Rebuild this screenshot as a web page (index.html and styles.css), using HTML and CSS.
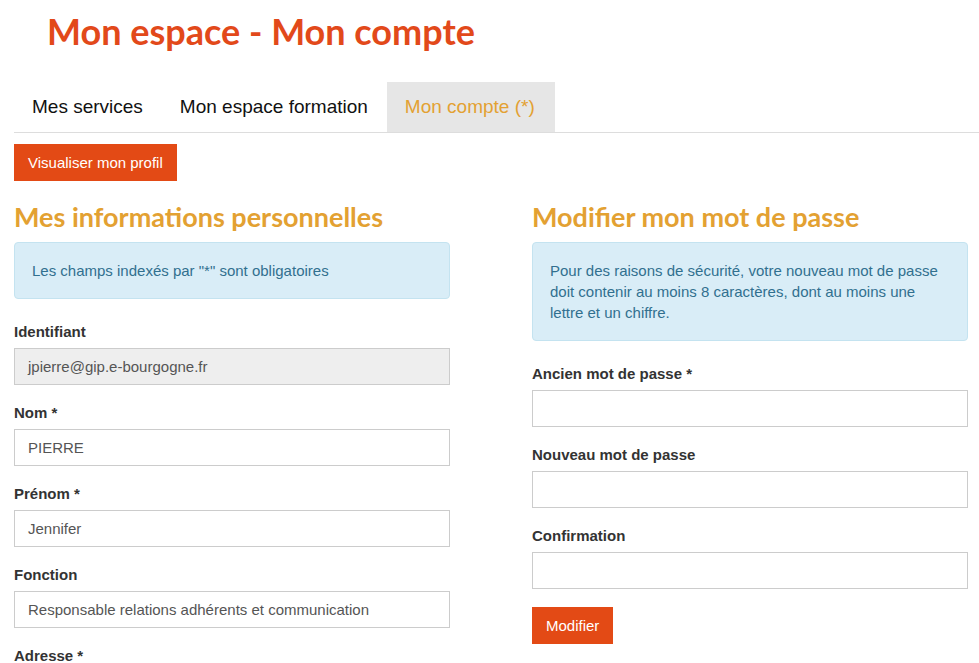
FILE: index.html
```html
<!DOCTYPE html>
<html lang="fr">
<head>
<meta charset="utf-8">
<title>Mon espace - Mon compte</title>
<link rel="stylesheet" href="styles.css">
</head>
<body>
<div class="page">
  <h1 class="title">Mon espace - Mon compte</h1>
  <ul class="tabs">
    <li class="tab">Mes services</li>
    <li class="tab">Mon espace formation</li>
    <li class="tab active">Mon compte (*)</li>
  </ul>
  <button class="btn">Visualiser mon profil</button>
  <div class="cols">
    <section class="col">
      <h2 class="heading">Mes informations personnelles</h2>
      <div class="alert">Les champs indexés par "*" sont obligatoires</div>
      <div class="group">
        <label class="label">Identifiant</label>
        <div class="input disabled">jpierre@gip.e-bourgogne.fr</div>
      </div>
      <div class="group">
        <label class="label">Nom *</label>
        <div class="input">PIERRE</div>
      </div>
      <div class="group">
        <label class="label">Prénom *</label>
        <div class="input">Jennifer</div>
      </div>
      <div class="group">
        <label class="label">Fonction</label>
        <div class="input">Responsable relations adhérents et communication</div>
      </div>
      <div class="group">
        <label class="label">Adresse *</label>
        <div class="input"></div>
      </div>
    </section>
    <section class="col">
      <h2 class="heading">Modifier mon mot de passe</h2>
      <div class="alert">Pour des raisons de sécurité, votre nouveau mot de passe doit contenir au moins 8 caractères, dont au moins une lettre et un chiffre.</div>
      <div class="group">
        <label class="label">Ancien mot de passe *</label>
        <div class="input"></div>
      </div>
      <div class="group">
        <label class="label">Nouveau mot de passe</label>
        <div class="input"></div>
      </div>
      <div class="group">
        <label class="label">Confirmation</label>
        <div class="input"></div>
      </div>
      <button class="btn">Modifier</button>
    </section>
  </div>
</div>
</body>
</html>
```

FILE: styles.css
```css
html, body {
  margin: 0;
  padding: 0;
  background: #ffffff;
  overflow: hidden;
}
body {
  font-family: "Liberation Sans", Arial, sans-serif;
  font-size: 15px;
  color: #333333;
}
.page {
  padding: 0 11px 0 14px;
}
.title {
  margin: 0;
  padding: 8px 0 0 33px;
  height: 82px;
  box-sizing: border-box;
  font-family: "Lato", "Open Sans", sans-serif;
  font-weight: 700;
  font-size: 36px;
  line-height: 46px;
  color: #e2491a;
}
.tabs {
  list-style: none;
  margin: 0 -11px 0 0;
  padding: 0;
  display: flex;
  height: 50px;
  border-bottom: 1px solid #dddddd;
}
.tab {
  padding: 0 19px 0 18px;
  font-size: 19px;
  line-height: 50px;
  color: #111111;
}
.active {
  padding: 0 20px 0 18px;
  background: #e6e6e6;
  color: #e3a132;
}
.btn {
  display: block;
  margin-top: 11px;
  height: 37px;
  padding: 0 14px 0 14px;
  border: none;
  background: #e34a15;
  color: #ffffff;
  font-family: "Liberation Sans", Arial, sans-serif;
  font-size: 15px;
}
.cols {
  display: grid;
  grid-template-columns: 436px 436px;
  column-gap: 82px;
  margin-top: 19px;
}
.heading {
  margin: 0;
  height: 42px;
  font-family: "Lato", "Open Sans", sans-serif;
  font-weight: 700;
  font-size: 27px;
  line-height: 34px;
  color: #e3a132;
}
.alert {
  background: #d9edf7;
  border: 1px solid #c4e3f0;
  border-radius: 4px;
  padding: 17px 17px;
  color: #31708f;
  line-height: 21px;
  margin-bottom: 23px;
}
.group {
  margin-bottom: 18px;
}
.label {
  display: block;
  font-weight: 700;
  line-height: 20px;
  margin-bottom: 6px;
  color: #333333;
}
.input {
  height: 37px;
  box-sizing: border-box;
  border: 1px solid #cccccc;
  padding: 0 13px;
  line-height: 35px;
  color: #555555;
  background: #ffffff;
}
.disabled {
  background: #eeeeee;
}
```
